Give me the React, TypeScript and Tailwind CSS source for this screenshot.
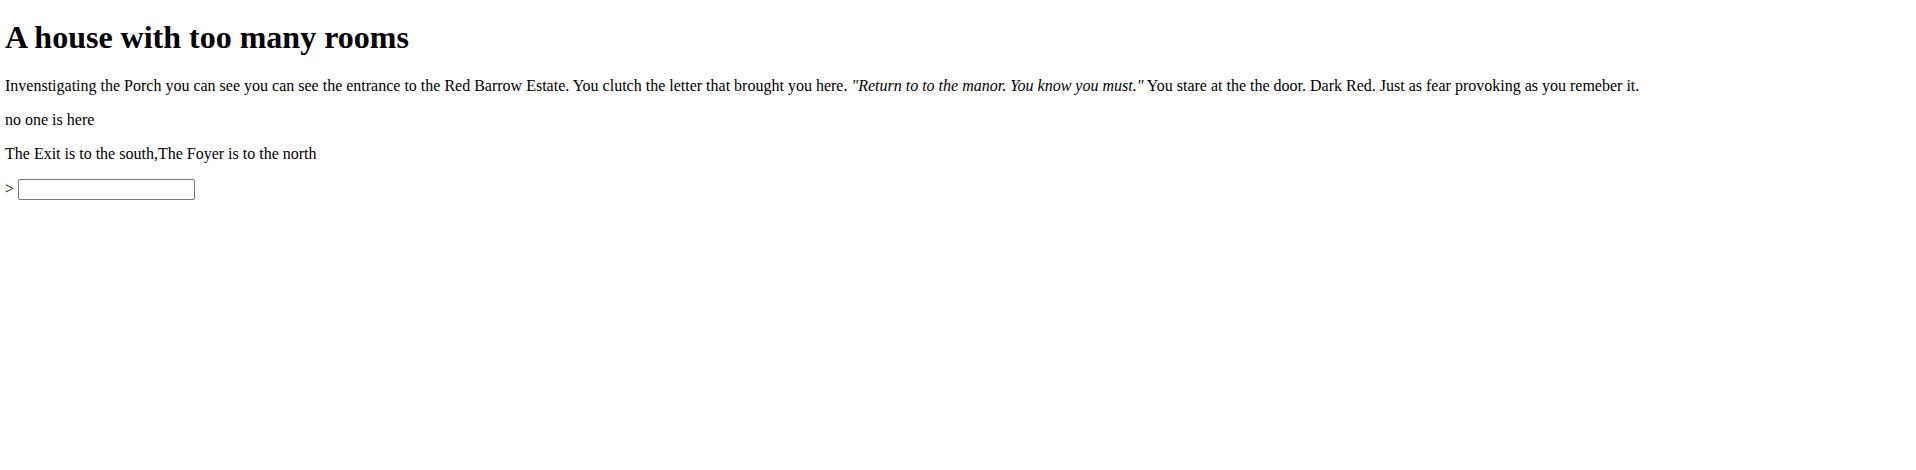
const App = () => {
  return (
    <main className="px-[5px] pt-px font-['Liberation_Serif',serif] text-[16px] leading-[normal] text-black bg-white min-h-[470px]">
      <h1 className="text-[32px] font-bold leading-[normal] mt-[17.5px] mb-[21.44px]">A house with too many rooms</h1>
      <p className="my-4">
        Invenstigating the Porch you can see you can see the entrance to the Red Barrow Estate. You clutch the letter
        that brought you here. <em>"Return to to the manor. You know you must."</em> You stare at the the door. Dark
        Red. Just as fear provoking as you remeber it.
      </p>
      <p className="my-4">no one is here</p>
      <p className="my-4">The Exit is to the south,The Foyer is to the north</p>
      <p className="my-4">
        &gt;{" "}
        <input
          type="text"
          className="w-[177px] h-[21px] border border-[#767676] rounded-[2px] px-[2px] align-baseline font-['Liberation_Sans',sans-serif] text-[13.33px]"
        />
      </p>
    </main>
  );
};

export default App;
